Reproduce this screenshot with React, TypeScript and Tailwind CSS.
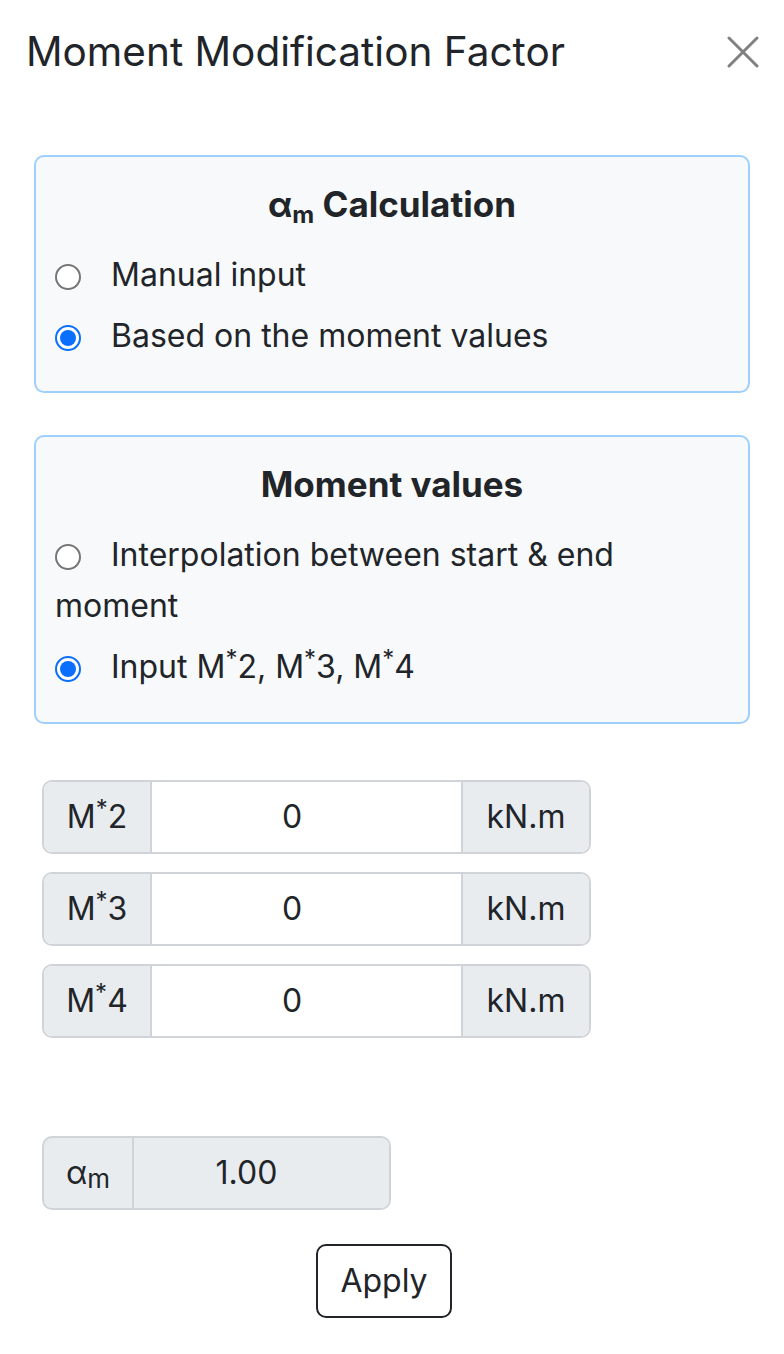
import React from 'react'

function Radio({ checked }: { checked?: boolean }) {
  if (checked) {
    return (
      <span className="mr-[30px] inline-block h-[26px] w-[26px] rounded-full border-2 border-[#0b6ffd] bg-white p-[3px] align-[-4px]">
        <span className="block h-[16px] w-[16px] rounded-full bg-[#0b6ffd]" />
      </span>
    )
  }
  return <span className="mr-[30px] inline-block h-[26px] w-[26px] rounded-full border-2 border-[#767676] bg-white align-[-4px]" />
}

function Star() {
  return <span className="relative -top-[11px] text-[24px] leading-none">*</span>
}

function MomentRow({ n }: { n: string }) {
  return (
    <div className="flex h-[74px] w-[549px] overflow-hidden rounded-[10px] border-2 border-[#d0d4d9] text-[32px]">
      <div className="flex w-[106px] shrink-0 items-center justify-center bg-[#e9ecef]">
        <span>
          M<Star />
          {n}
        </span>
      </div>
      <input
        readOnly
        value="0"
        className="w-[313px] min-w-0 shrink-0 border-x-2 border-[#d0d4d9] bg-white pl-[12px] pr-[41px] text-center outline-none"
      />
      <div className="flex flex-1 items-center justify-center bg-[#e9ecef]">kN.m</div>
    </div>
  )
}

export default function App() {
  return (
    <div className="min-h-[1354px] w-[784px] bg-white text-[#212529]" style={{ fontFamily: 'Inter, "Noto Sans", sans-serif' }}>
      <div className="flex items-center justify-between pl-[26px] pr-[25px] pt-[28px]">
        <h5 className="text-[40.5px] leading-[48px]">Moment Modification Factor</h5>
        <svg width="32" height="32" viewBox="0 0 32 32" className="text-[#808080]">
          <path d="M2 2 L30 30 M30 2 L2 30" stroke="currentColor" strokeWidth="3" strokeLinecap="round" />
        </svg>
      </div>

      <div className="px-[34px]">
        <div className="mt-[79px] rounded-[10px] border-2 border-[#9fcffb] bg-[#f8f9fa] px-[19px] pb-[30px] pt-[22px] text-[32px]">
          <div className="mb-[19px] text-center text-[35px] font-bold leading-[51px]">
            α<sub className="text-[24px]">m</sub> Calculation
          </div>
          <p className="leading-[51px]">
            <Radio />
            Manual input
          </p>
          <p className="mt-[10px] leading-[51px]">
            <Radio checked />
            Based on the moment values
          </p>
        </div>

        <div className="mt-[42px] rounded-[10px] border-2 border-[#9fcffb] bg-[#f8f9fa] px-[19px] pb-[30px] pt-[22px] text-[32px]">
          <div className="mb-[19px] text-center text-[35px] font-bold leading-[51px]">Moment values</div>
          <p className="leading-[51px]">
            <Radio />
            Interpolation between start &amp; end moment
          </p>
          <p className="mt-[10px] leading-[51px]">
            <Radio checked />
            Input M<Star />2, M<Star />3, M<Star />4
          </p>
        </div>

        <div className="mt-[56px] flex flex-col gap-[18px] pl-[8px]">
          <MomentRow n="2" />
          <MomentRow n="3" />
          <MomentRow n="4" />
        </div>

        <div className="ml-[8px] mt-[98px] flex h-[74px] w-[349px] overflow-hidden rounded-[10px] border-2 border-[#d0d4d9] bg-[#e9ecef] text-[32px]">
          <div className="flex w-[90px] shrink-0 items-center justify-center border-r-2 border-[#d0d4d9]">
            <span>
              α<span className="relative top-[4px] text-[26px]">m</span>
            </span>
          </div>
          <input
            readOnly
            value="1.00"
            className="w-[255px] min-w-0 shrink-0 bg-[#e9ecef] pl-[12px] pr-[42px] text-center outline-none"
          />
        </div>

        <div className="mt-[34px] flex pl-[282px]">
          <button className="h-[74px] w-[136px] rounded-[10px] border-2 border-[#212529] bg-white text-[32px]">Apply</button>
        </div>
      </div>
    </div>
  )
}
